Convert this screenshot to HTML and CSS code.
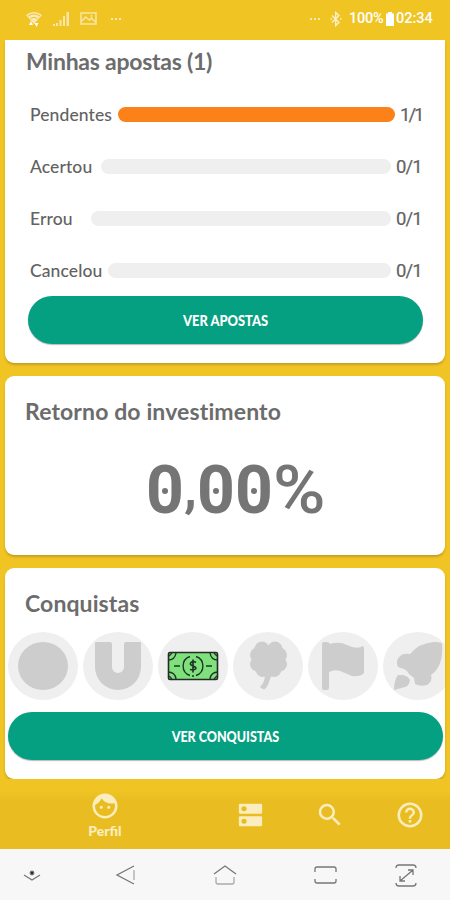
FILE: index.html
```html
<!DOCTYPE html>
<html lang="pt-BR">
<head>
<meta charset="utf-8">
<title>Perfil</title>
<link rel="stylesheet" href="styles.css">
</head>
<body>
<div class="screen">
  <header class="status">
    <svg class="wifi" width="18" height="18" viewBox="0 0 18 18"><path d="M1 5Q9-1 17 5L9 14Z" fill="#f9e9b4"/><path d="M3 6Q9 2 15 6M5.500 8.500Q9 6 12.500 8.500" fill="none" stroke="#efc425" stroke-width="1"/><path d="M4 15l2-4 2 4zM9.500 13h4l-2 4z" fill="#fff"/></svg>
    <svg class="signal" width="18" height="16" viewBox="0 0 18 16"><path d="M1 13h2v2H1zM4 12h2v3H4zM7.500 9h2v6h-2zM11 5h2v10h-2zM14.500 1h2.500v14h-2.500z" fill="#f9e6a8"/></svg>
    <svg class="photo" width="17" height="13" viewBox="0 0 17 13"><path d="M1 1h15v11H1zM2 9l3.500-4 4 3 2-2 4 4" fill="none" stroke="#f9e6a8" stroke-width="1.500"/><circle cx="11.500" cy="4" r="1" fill="#f9e6a8"/></svg>
    <span class="dots"><i></i><i></i><i></i></span>
    <span class="dots dots-right"><i></i><i></i><i></i></span>
    <svg class="bt" width="12" height="16" viewBox="0 0 12 16"><path d="M2 4.500l7 7-3.300 3V1.500l3.300 3-7 7M.5 8h1.500M10 8h1.500" fill="none" stroke="#fbf0cc" stroke-width="1.400"/></svg>
    <span class="percent">100%</span>
    <svg class="battery" width="8" height="14" viewBox="0 0 8 14"><path d="M2 0h4v1.500h2V14H0V1.500h2z" fill="#fff"/></svg>
    <span class="clock">02:34</span>
  </header>
  <main class="cards">
    <section class="card bets">
      <h2 class="title t-bets">Minhas apostas (1)</h2>
      <div class="rows">
        <div class="row pend"><span class="label">Pendentes</span><span class="bar full"></span><span class="value">1/1</span></div>
        <div class="row hit"><span class="label">Acertou</span><span class="bar"></span><span class="value">0/1</span></div>
        <div class="row miss"><span class="label">Errou</span><span class="bar"></span><span class="value">0/1</span></div>
        <div class="row cancel"><span class="label">Cancelou</span><span class="bar"></span><span class="value">0/1</span></div>
      </div>
      <button class="btn"><span>VER APOSTAS</span></button>
    </section>
    <section class="card roi">
      <h2 class="title t-roi">Retorno do investimento</h2>
      <p class="amount"><span class="zero">0</span><span class="comma">,</span><span class="zero">0</span><span class="zero">0</span><span class="pct">%</span></p>
    </section>
    <section class="card awards">
      <h2 class="title t-awards">Conquistas</h2>
      <div class="badges">
        <svg viewBox="0 0 70 68"><ellipse class="disc" cx="35" cy="34" rx="35" ry="34"/><ellipse class="glyph" cx="35" cy="34" rx="25" ry="24"/></svg>
        <svg viewBox="0 0 70 68"><ellipse class="disc" cx="35" cy="34" rx="35" ry="34"/><path class="glyph" d="M12 11q0-1 1-1h14q2 0 2 2v23a6 6 0 0 0 12 0V12q0-2 2-2h14q1 0 1 1v24a23 23 0 0 1-46 0z"/></svg>
        <svg viewBox="0 0 70 68"><ellipse class="disc" cx="35" cy="34" rx="35" ry="34"/><rect x="10.500" y="20.500" width="49" height="27" rx="1.500" fill="#7ee17b" stroke="#242b27" stroke-width="1.600"/><g fill="none" stroke="#20352a" stroke-width="1.400"><path d="M10 28q7 0 8-7M52 21q1 7 8 7M60 40q-7 0-8 7M18 47q-1-7-8-7M11 24l3-3M56 21l3 3M59 44l-3 3M14 47l-3-3M16 34h6M48 34h6"/><path d="M32 24.500a10 10 0 0 0 0 19M38 24.500a10 10 0 0 1 0 19M34 44h2"/><path d="M38 30.500q-3-2-5 0t2 3.500 2.500 3-5.500.5M35 27.500v13" stroke-width="1.700"/></g></svg>
        <svg viewBox="0 0 70 68"><ellipse class="disc" cx="35" cy="34" rx="35" ry="34"/><g class="glyph"><circle cx="29" cy="17" r="7.500"/><circle cx="42" cy="17" r="7.500"/><circle cx="24.500" cy="23" r="7.500"/><circle cx="46.500" cy="23" r="7.500"/><circle cx="24.500" cy="32" r="7.500"/><circle cx="46.500" cy="32" r="7.500"/><circle cx="30" cy="37.500" r="7.500"/><circle cx="41" cy="37.500" r="7.500"/><path d="M24 18h22v24H24zM32 43h6q0 3-2 7-1 4-4 7-2 1-5-2 5-5 5-12z"/></g></svg>
        <svg viewBox="0 0 70 68"><ellipse class="disc" cx="35" cy="34" rx="35" ry="34"/><path class="glyph" d="M14 12q0-2 2-2h3q2 0 3 2 9-3 17 1 8 4 14 2l1-1q2 0 2 2v25q-4 4-12 3-7-3-12-5-5-2-11 1v15q0 3-2 3h-4q-1 0-1-3z"/></svg>
        <svg viewBox="0 0 70 68"><ellipse class="disc" cx="35" cy="34" rx="35" ry="34"/><path class="glyph" d="M59 11q-3-1-8-1-15 1-24 12-7-1-10 2-5 5-2 11l6 2q3 1 5 5l5 4 1 6q6 3 12 1 6-4 4-10 13-9 11-32zM20 43q5 1 7 5-1 6-5 7l-11 3q0-10 4-15z"/></svg>
      </div>
      <button class="btn"><span>VER CONQUISTAS</span></button>
    </section>
  </main>
  <nav class="tabs">
    <a class="tab profile"><svg width="30" height="30" viewBox="0 0 24 24"><path d="M9 11.750a1.250 1.250 0 1 0 0 2.500 1.250 1.250 0 0 0 0-2.500zm6 0a1.250 1.250 0 1 0 0 2.500 1.250 1.250 0 0 0 0-2.500zM12 2a10 10 0 1 0 0 20 10 10 0 0 0 0-20zm0 18a8 8 0 0 1-7.950-8.850 10.050 10.050 0 0 0 5.210-5.370A9.990 9.990 0 0 0 19.670 9.750 8 8 0 0 1 12 20z"/></svg><span>Perfil</span></a>
    <a class="tab"><svg width="31" height="30" viewBox="0 0 24 24" preserveAspectRatio="none"><path d="M20 13H4a1 1 0 0 0-1 1v6a1 1 0 0 0 1 1h16a1 1 0 0 0 1-1v-6a1 1 0 0 0-1-1zM7 19a2 2 0 1 1 0-4 2 2 0 0 1 0 4zM20 3H4a1 1 0 0 0-1 1v6a1 1 0 0 0 1 1h16a1 1 0 0 0 1-1V4a1 1 0 0 0-1-1zM7 9a2 2 0 1 1 0-4 2 2 0 0 1 0 4z"/></svg></a>
    <a class="tab"><svg width="30" height="30" viewBox="0 0 24 24"><path d="M15.500 14h-.79l-.28-.27A6.470 6.470 0 0 0 16 9.500 6.500 6.500 0 1 0 9.500 16c1.610 0 3.090-.59 4.230-1.570l.27.28v.79l5 4.990L20.490 19l-4.990-5zm-6 0a4.500 4.500 0 1 1 0-9 4.500 4.500 0 0 1 0 9z"/></svg></a>
    <a class="tab"><svg width="30" height="30" viewBox="0 0 24 24"><path d="M11 18h2v-2h-2v2zm1-16a10 10 0 1 0 0 20 10 10 0 0 0 0-20zm0 18a8 8 0 1 1 0-16 8 8 0 0 1 0 16zm0-14a4 4 0 0 0-4 4h2a2 2 0 1 1 4 0c0 2-3 1.750-3 5h2c0-2.250 3-2.500 3-5a4 4 0 0 0-4-4z"/></svg></a>
  </nav>
  <footer class="system">
    <svg viewBox="0 0 30 30"><path d="M7 15l8 5 8-5"/><circle cx="15" cy="13" r="1.800" fill="#222"/></svg>
    <svg viewBox="0 0 30 30"><path d="M23 6L6 15l17 9"/><path d="M23 10v10" class="faint"/></svg>
    <svg viewBox="0 0 30 30"><path d="M4 14l11-8 11 8"/><path d="M6 17v5q0 2 2 2h14q2 0 2-2v-5" class="faint"/></svg>
    <svg viewBox="0 0 30 30"><path d="M5 12V9q0-2 2-2h17q2 0 2 2v3M5 19v2q0 2 2 2h17q2 0 2-2v-2"/></svg>
    <svg viewBox="0 0 30 30"><path d="M5 8q0-3 3-3h14q3 0 3 3M5 23q0 3 3 3h14q3 0 3-3M9 21L22 10M17 10h5v5M14 21H9v-5"/></svg>
  </footer>
</div>
</body>
</html>
```
FILE: styles.css
```css
* { box-sizing: border-box; }
body { margin: 0; font-family: Lato, "Liberation Sans", sans-serif; color: #626262; }
.screen { width: 450px; height: 900px; display: flex; flex-direction: column; overflow: hidden; background: #efc423; }
.status { height: 40px; flex: none; display: flex; align-items: center; padding: 0 16px 3px 25px; color: #fff; font: 500 14.500px Roboto, sans-serif; }
.wifi { margin-right: 9px; }
.signal { margin-right: 10px; }
.photo { margin-right: 14px; }
.dots { display: flex; gap: 2px; }
.dots i { width: 2px; height: 2px; background: #fae9b5; }
.dots-right { margin-left: auto; margin-right: 10px; }
.bt { margin-right: 7px; }
.percent { width: 37px; white-space: nowrap; letter-spacing: -.2px; }
.battery { margin-right: 2px; }
.clock { width: 38px; white-space: nowrap; }
.cards { display: flex; flex-direction: column; gap: 13px; padding: 0 5px; height: 739px; flex: none; }
.card { background: #fff; border-radius: 9px; box-shadow: 0 2px 2px #b88d20aa; overflow: hidden; }
.bets { height: 323px; border-radius: 0 0 9px 9px; padding: 5px 22px 0 23px; }
.roi { height: 180px; padding: 19px 20px 0; }
.awards { height: 211px; padding: 19px 2px 0 3px; }
.title { margin: 0; font-size: 23px; line-height: 32px; height: 32px; font-weight: 700; color: #6c6c6c; white-space: nowrap; }
.t-bets { margin-left: -2px; letter-spacing: -.25px; }
.t-roi { letter-spacing: .12px; font-variant-ligatures: none; }
.t-awards { margin-left: 17px; letter-spacing: .1px; }
.rows { display: grid; grid-template-rows: repeat(4, 52px); margin-top: 11px; }
.row { display: flex; align-items: center; padding: 0 2px; }
.label { font-size: 17.500px; font-weight: 500; line-height: 20px; padding-top: 1px; white-space: nowrap; letter-spacing: .1px; }
.pend .label { width: 88px; }
.hit .label { width: 71px; }
.miss .label { width: 61px; }
.cancel .label { width: 78px; }
.bar { height: 15px; flex: 1; background: #efefef; border-radius: 8px; }
.full { background: #fc8118; }
.value { font: 18.500px/20px Roboto, sans-serif; width: 30px; padding: 1px 0 0 5px; white-space: nowrap; letter-spacing: -.9px; -webkit-text-stroke: .2px #626262; }
.pend .value { width: 26px; letter-spacing: -2px; }
.btn { display: block; width: 100%; height: 48px; border: 0; border-radius: 24px; padding: 0; background: #05a081; color: #fff; font: 900 15px Lato, sans-serif; box-shadow: 0 1px 1px #bbb; }
.btn span { display: inline-block; transform: scaleX(.86); }
.awards .btn span { transform: scaleX(.835); }
.amount { margin: 29px 0 0 121px; height: 70px; display: flex; font: 700 66px/70px Roboto, sans-serif; color: #757575; }
.zero { position: relative; width: 38px; }
.zero::after { content: ""; position: absolute; left: 16px; top: 32px; width: 6px; height: 6px; border-radius: 50%; background: #757575; }
.comma { width: 13px; font-size: 52px; margin-top: -2px; }
.pct { font-weight: 500; transform: scaleX(1.08); transform-origin: 0 0; }
.badges { display: flex; gap: 5px; margin-top: 13px; height: 68px; overflow: hidden; margin-right: -2px; }
.badges svg { width: 70px; height: 68px; flex: none; }
.disc { fill: #efefef; }
.glyph { fill: #cdcdcd; }
.awards .btn { margin-top: 12px; }
.tabs { flex: none; height: 70px; display: grid; grid-template-columns: 210px 80px 80px 80px; padding-top: 11px; background: linear-gradient(#efc423 0 12px, #e9bd22 22px); }
.tab { display: flex; flex-direction: column; align-items: center; justify-content: center; height: 50px; color: #fbedbd; font-size: 14px; font-weight: 900; line-height: 16px; }
.tab svg { fill: currentColor; }
.profile { justify-content: flex-start; padding-top: 1px; gap: 2px; }
.system { flex: 1; display: grid; grid-template-columns: 94px 99px 100px 81px 30px; align-items: center; padding-left: 17px; background: #f7f7f7; }
.system svg { width: 30px; height: 30px; fill: none; stroke: #777; stroke-width: 1.300; }
.system .faint { stroke: #aaa; }
```
